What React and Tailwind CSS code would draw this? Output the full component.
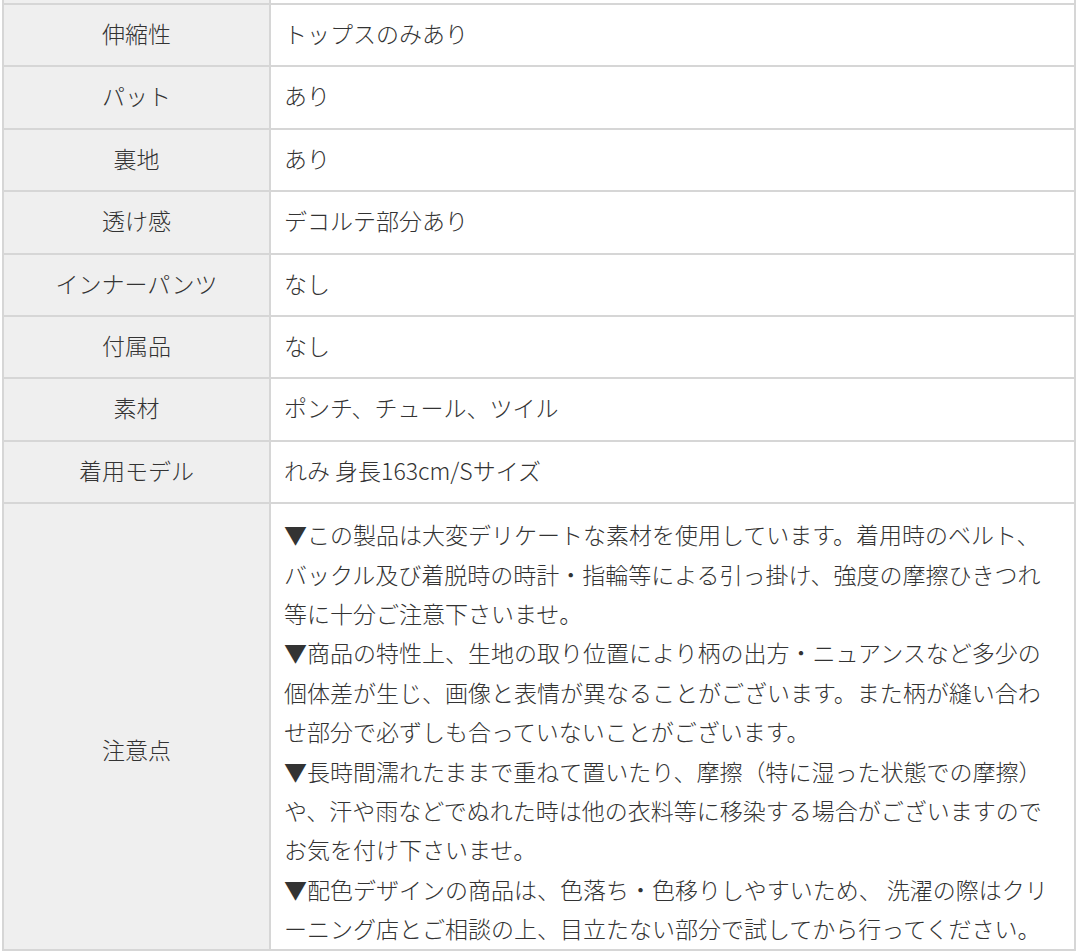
import React from 'react';

const rows = [
  { label: '伸縮性', value: 'トップスのみあり' },
  { label: 'パット', value: 'あり' },
  { label: '裏地', value: 'あり' },
  { label: '透け感', value: 'デコルテ部分あり' },
  { label: 'インナーパンツ', value: 'なし' },
  { label: '付属品', value: 'なし' },
  { label: '素材', value: 'ポンチ、チュール、ツイル' },
  { label: '着用モデル', value: 'れみ 身長163cm/Sサイズ' },
];

const notes = [
  '▼この製品は大変デリケートな素材を使用しています。着用時のベルト、バックル及び着脱時の時計・指輪等による引っ掛け、強度の摩擦ひきつれ等に十分ご注意下さいませ。',
  '▼商品の特性上、生地の取り位置により柄の出方・ニュアンスなど多少の個体差が生じ、画像と表情が異なることがございます。また柄が縫い合わせ部分で必ずしも合っていないことがございます。',
  '▼長時間濡れたままで重ねて置いたり、摩擦（特に湿った状態での摩擦）や、汗や雨などでぬれた時は他の衣料等に移染する場合がございますのでお気を付け下さいませ。',
  '▼配色デザインの商品は、色落ち・色移りしやすいため、 洗濯の際はクリーニング店とご相談の上、目立たない部分で試してから行ってください。',
];

const SpecRow = ({ label, value }) => (
  <div className="grid grid-cols-[267px_1fr] border-t-2 border-[#d6d6d6]">
    <div className="bg-[#efefef] border-r-2 border-[#d6d6d6] text-center pt-[9px] pb-[12.4px] leading-[39px]">
      {label}
    </div>
    <div className="bg-white pl-[13px] pr-[18px] pt-[9px] pb-[12.4px] leading-[39px]">{value}</div>
  </div>
);

export default function App() {
  return (
    <div
      className="bg-white min-h-[952px] text-[23px] font-light text-[#333333] pl-[2px]"
      style={{ fontFamily: '"Noto Sans CJK JP", "Noto Sans", sans-serif' }}
    >
      <div className="w-[1074px] border-x-2 border-b-2 border-[#d6d6d6]">
        {/* tail of the row above, cut off by the viewport */}
        <div className="grid grid-cols-[267px_1fr] h-[3px]">
          <div className="bg-[#efefef] border-r-2 border-[#d6d6d6]"></div>
          <div className="bg-white"></div>
        </div>

        {rows.map((r) => (
          <SpecRow key={r.label} label={r.label} value={r.value} />
        ))}

        <div className="grid grid-cols-[267px_1fr] border-t-2 border-[#d6d6d6]">
          <div className="bg-[#efefef] border-r-2 border-[#d6d6d6] flex items-center justify-center pt-[46px] leading-[39px]">
            注意点
          </div>
          <div className="bg-white pl-[13px] pr-[18px] pt-[11px] pb-0 leading-[39.4px]">
            {notes.map((n, i) => (
              <p key={i}>{n}</p>
            ))}
          </div>
        </div>
      </div>
    </div>
  );
}
